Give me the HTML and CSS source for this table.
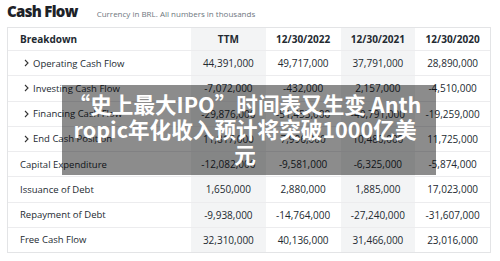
FILE: index.html
```html
<!DOCTYPE html>
<html lang="en">
<head>
<meta charset="utf-8">
<title>Cash Flow</title>
<link rel="stylesheet" href="styles.css">
</head>
<body>
<div class="page">
  <div class="head">
    <h1 class="title">Cash Flow</h1>
    <span class="sub">Currency in BRL. All numbers in thousands</span>
  </div>
  <div class="table">
    <div class="row hdr">
      <div class="lab">Breakdown</div>
      <div class="c g">TTM</div>
      <div class="c">12/30/2022</div>
      <div class="c g">12/30/2021</div>
      <div class="c">12/30/2020</div>
    </div>
    <div class="row">
      <div class="lab exp"><svg class="chev" width="5" height="8" viewBox="0 0 5 8"><path d="M1 1l3 3-3 3" fill="none" stroke="#333" stroke-width="1.1"/></svg>Operating Cash Flow</div>
      <div class="c g">44,391,000</div><div class="c">49,717,000</div><div class="c g">37,791,000</div><div class="c">28,890,000</div>
    </div>
    <div class="row">
      <div class="lab exp"><svg class="chev" width="5" height="8" viewBox="0 0 5 8"><path d="M1 1l3 3-3 3" fill="none" stroke="#333" stroke-width="1.1"/></svg>Investing Cash Flow</div>
      <div class="c g">-7,072,000</div><div class="c">-432,000</div><div class="c g">2,157,000</div><div class="c">-4,510,000</div>
    </div>
    <div class="row">
      <div class="lab exp"><svg class="chev" width="5" height="8" viewBox="0 0 5 8"><path d="M1 1l3 3-3 3" fill="none" stroke="#333" stroke-width="1.1"/></svg>Financing Cash Flow</div>
      <div class="c g">-29,876,000</div><div class="c">-51,453,000</div><div class="c g">-40,791,000</div><div class="c">-19,259,000</div>
    </div>
    <div class="row">
      <div class="lab exp"><svg class="chev" width="5" height="8" viewBox="0 0 5 8"><path d="M1 1l3 3-3 3" fill="none" stroke="#333" stroke-width="1.1"/></svg>End Cash Position</div>
      <div class="c g">11,817,000</div><div class="c">7,996,000</div><div class="c g">10,480,000</div><div class="c">11,725,000</div>
    </div>
    <div class="row">
      <div class="lab">Capital Expenditure</div>
      <div class="c g">-12,082,000</div><div class="c">-9,581,000</div><div class="c g">-6,325,000</div><div class="c">-5,874,000</div>
    </div>
    <div class="row">
      <div class="lab">Issuance of Debt</div>
      <div class="c g">1,650,000</div><div class="c">2,880,000</div><div class="c g">1,885,000</div><div class="c">17,023,000</div>
    </div>
    <div class="row">
      <div class="lab">Repayment of Debt</div>
      <div class="c g">-9,938,000</div><div class="c">-14,764,000</div><div class="c g">-27,240,000</div><div class="c">-31,607,000</div>
    </div>
    <div class="row">
      <div class="lab">Free Cash Flow</div>
      <div class="c g">32,310,000</div><div class="c">40,136,000</div><div class="c g">31,466,000</div><div class="c">23,016,000</div>
    </div>
  </div>
  <div class="overlay">
    <p class="ovtext">“史上最大IPO”时间表又生变 Anth<br>ropic年化收入预计将突破1000亿美<br>元</p>
  </div>
</div>
</body>
</html>
```
FILE: styles.css
```css
html, body {
  margin: 0;
  padding: 0;
  background: #ffffff;
}
body {
  font-family: "Open Sans", "Liberation Sans", sans-serif;
  color: #232a31;
}
.page {
  position: relative;
  width: 500px;
  height: 261px;
  padding: 0 9px 0 7px;
  box-sizing: border-box;
}
.head {
  display: flex;
  align-items: baseline;
  height: 27px;
  padding-top: 1px;
  box-sizing: border-box;
}
.title {
  margin: 0;
  font-size: 15px;
  line-height: 20px;
  font-weight: 800;
  letter-spacing: -0.7px;
  color: #1d2228;
}
.sub {
  margin-left: 19px;
  font-size: 8px;
  color: #6e7780;
}
.table {
  width: 484px;
  height: 226px;
  box-sizing: border-box;
  border: 1px solid #e3e4e6;
  display: flex;
  flex-direction: column;
}
.row {
  display: grid;
  grid-template-columns: 183px repeat(4, 1fr);
  flex: 1 1 0;
  border-bottom: 1px solid #ececee;
  font-size: 10px;
}
.row:last-child {
  border-bottom: none;
}
.row.hdr {
  flex: 0 0 23px;
  font-weight: 700;
  box-sizing: border-box;
}
.lab {
  display: flex;
  align-items: center;
  padding-left: 12px;
  font-size: 9.5px;
}
.hdr .lab {
  font-size: 10px;
}
.lab.exp {
  padding-left: 16px;
}
.chev {
  margin-right: 4px;
  flex: none;
}
.c {
  display: flex;
  align-items: center;
  justify-content: center;
}
.g {
  background: #f3f4f5;
}
.overlay {
  position: absolute;
  left: 62px;
  top: 85px;
  width: 374px;
  height: 90px;
  background: rgba(0, 0, 0, 0.45);
  display: flex;
  justify-content: center;
  box-sizing: border-box;
  padding: 6px 8px 0 0;
}
.ovtext {
  margin: 0;
  font-family: "Noto Sans CJK SC", "Noto Sans", sans-serif;
  font-weight: 700;
  font-size: 21.6px;
  line-height: 25px;
  color: #ffffff;
  text-align: center;
  white-space: nowrap;
}
```
